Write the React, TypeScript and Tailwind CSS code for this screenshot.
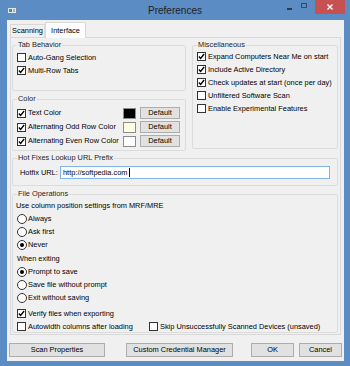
import type { ReactNode } from "react"

interface CheckProps {
  checked?: boolean
  children: ReactNode
}

function CheckBox({ checked = false, children }: CheckProps) {
  return (
    <div className="flex items-center gap-[2px] h-[13px]">
      <span className="w-[9px] h-[9px] border border-[#333] bg-white flex items-center justify-center shrink-0">
        {checked && (
          <svg viewBox="0 0 8 8" className="w-[7px] h-[7px]">
            <path d="M1 4 L3 6.2 L7 1.2" stroke="#000" strokeWidth="1.6" fill="none" />
          </svg>
        )}
      </span>
      <span className="whitespace-nowrap">{children}</span>
    </div>
  )
}

function Radio({ checked = false, children }: CheckProps) {
  return (
    <div className="flex items-center gap-[1px] h-[13px]">
      <span className="w-[10px] h-[10px] rounded-full border border-[#333] bg-white flex items-center justify-center shrink-0">
        {checked && <span className="w-[4px] h-[4px] rounded-full bg-black" />}
      </span>
      <span className="whitespace-nowrap">{children}</span>
    </div>
  )
}

function Button({ className = "", children }: { className?: string; children: ReactNode }) {
  return (
    <div
      className={`flex items-center justify-center border border-[#adadad] bg-[#e1e1e1] whitespace-nowrap ${className}`}
    >
      {children}
    </div>
  )
}

interface GroupProps {
  title: string
  className?: string
  children: ReactNode
}

// legend sits on the top border like a WinForms GroupBox
function Group({ title, className = "", children }: GroupProps) {
  return (
    <fieldset className={`border border-[#dcdcdc] rounded-[2px] ${className}`}>
      <legend className="ml-[4px] px-[1px] leading-[10px] text-[#1e1e1e]">{title}</legend>
      {children}
    </fieldset>
  )
}

const colorRows = [
  { label: "Text Color", swatch: "bg-black" },
  { label: "Alternating Odd Row Color", swatch: "bg-[#ffffe0]" },
  { label: "Alternating Even Row Color", swatch: "bg-white" },
]

export default function App() {
  return (
    <div className="w-[350px] h-[366px] bg-[#5b8cc4] flex flex-col overflow-hidden font-['Liberation_Sans',Arial,sans-serif] text-[7.4px] text-black">
      {/* title bar */}
      <div className="h-[20px] shrink-0 grid grid-cols-[1fr_auto_1fr]">
        <div className="flex items-center pl-[7px]">
          <svg viewBox="0 0 10 7" className="w-[10px] h-[7px]">
            <rect x="0.5" y="0.5" width="9" height="6" fill="#dfe6ec" stroke="#7b8894" />
            <rect x="2" y="2" width="3" height="3" fill="#3aa35c" />
            <rect x="6" y="2" width="2" height="3" fill="#9fb0c0" />
          </svg>
        </div>
        <div className="flex items-center pt-[1px] text-[10px] text-[#222]">Preferences</div>
        <div className="flex justify-end items-start pr-[5px]">
          <div className="flex items-center h-[14px] mr-[9px]">
            <span className="w-[5px] h-[1.5px] bg-[#2d3b4c] mt-[4px]" />
          </div>
          <div className="flex items-center h-[14px] mr-[8px]">
            <span className="w-[6px] h-[5px] border border-[#3b4a5c] mb-[3px]" />
          </div>
          <div className="w-[30px] h-[14px] bg-[#c75050] flex items-center justify-center">
            <svg viewBox="0 0 6 6" className="w-[6px] h-[6px]">
              <path d="M0.5 0.5 L5.5 5.5 M5.5 0.5 L0.5 5.5" stroke="#fff" strokeWidth="1.4" />
            </svg>
          </div>
        </div>
      </div>

      {/* dialog body */}
      <div className="flex-1 ml-[7px] mr-[6px] mb-[5px] bg-[#f0f0f0] flex flex-col px-[2px]">
        {/* tabs */}
        <div className="h-[17px] mx-[1px] flex items-end">
          <div className="h-[13px] w-[35px] border border-b-0 border-[#d9d9d9] bg-[#f0f0f0] flex items-center justify-center">
            Scanning
          </div>
          <div className="h-[16px] w-[41px] -mb-px relative z-10 border border-b-0 border-[#d9d9d9] bg-white flex items-center justify-center">
            Interface
          </div>
        </div>

        {/* tab page */}
        <div className="h-[298px] mx-[1px] border border-[#d9d9d9] bg-[#f0f0f0] pl-[1px] pr-[2px] flex flex-col">
          <div className="flex gap-[6px] mt-[2px]">
            <div className="w-[174px] flex flex-col">
              <Group title="Tab Behavior" className="h-[51px]">
                <div className="pt-[1px] pl-[4px]">
                  <CheckBox>Auto-Gang Selection</CheckBox>
                  <CheckBox checked>Multi-Row Tabs</CheckBox>
                </div>
              </Group>
              <Group title="Color" className="h-[57px] mt-[3px]">
                <div className="pt-[2px] pl-[4px] pr-[5px]">
                  {colorRows.map((row) => (
                    <div key={row.label} className="h-[14px] flex items-center">
                      <div className="flex-1">
                        <CheckBox checked>{row.label}</CheckBox>
                      </div>
                      <span className={`w-[13px] h-[11px] border border-[#8c8c8c] mr-[4px] ${row.swatch}`} />
                      <Button className="w-[40px] h-[12px]">Default</Button>
                    </div>
                  ))}
                </div>
              </Group>
            </div>
            <Group title="Miscellaneous" className="flex-1 h-[109px]">
              <div className="pl-[4px]">
                <CheckBox checked>Expand Computers Near Me on start</CheckBox>
                <CheckBox checked>Include Active Directory</CheckBox>
                <CheckBox checked>Check updates at start (once per day)</CheckBox>
                <CheckBox>Unfiltered Software Scan</CheckBox>
                <CheckBox>Enable Experimental Features</CheckBox>
              </div>
            </Group>
          </div>

          <Group title="Hot Fixes Lookup URL Prefix" className="h-[33px] mt-[2px]">
            <div className="flex items-center mt-[3px] px-[7px]">
              <span className="w-[40px] whitespace-nowrap">Hotfix URL:</span>
              <div className="flex-1 h-[13px] border border-[#7eb4ea] bg-white flex items-center pl-[2px]">
                http://softpedia.com
                <span className="w-px h-[9px] bg-black ml-[1px]" />
              </div>
            </div>
          </Group>

          <Group title="File Operations" className="h-[144px] mt-[3px]">
            <div className="pl-[4px]">
              <div className="h-[13px] flex items-center -ml-[1px]">Use column position settings from MRF/MRE</div>
              <Radio>Always</Radio>
              <Radio>Ask first</Radio>
              <Radio checked>Never</Radio>
              <div className="h-[13px] flex items-center mt-[1px]">When exiting</div>
              <Radio checked>Prompt to save</Radio>
              <Radio>Save file without prompt</Radio>
              <Radio>Exit without saving</Radio>
              <div className="mt-[3px]">
                <CheckBox checked>Verify files when exporting</CheckBox>
                <div className="flex">
                  <div className="w-[132px]">
                    <CheckBox>Autowidth columns after loading</CheckBox>
                  </div>
                  <CheckBox>Skip Unsuccessfully Scanned Devices (unsaved)</CheckBox>
                </div>
              </div>
            </div>
          </Group>
        </div>

        {/* dialog buttons */}
        <div className="flex mt-[8px]">
          <Button className="w-[96px] h-[14px]">Scan Properties</Button>
          <Button className="w-[107px] h-[14px] ml-[21px]">Custom Credential Manager</Button>
          <Button className="w-[43px] h-[14px] ml-auto">OK</Button>
          <Button className="w-[43px] h-[14px] ml-[5px]">Cancel</Button>
        </div>
      </div>
    </div>
  )
}
